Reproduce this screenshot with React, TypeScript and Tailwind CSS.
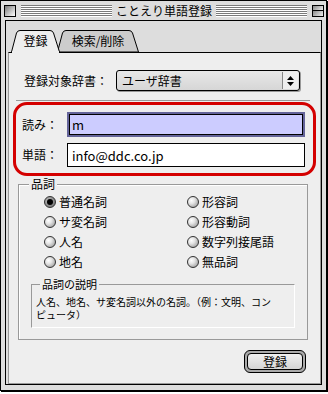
import React from 'react'

const font = "font-['Noto_Sans_CJK_JP',sans-serif]"

function Radio({ checked }: { checked?: boolean }) {
  return (
    <span
      className={
        'flex h-[12px] w-[12px] items-center justify-center rounded-full border border-[#333] ' +
        (checked
          ? 'bg-[radial-gradient(circle_at_35%_35%,#bbb_0%,#666_100%)]'
          : 'bg-[radial-gradient(circle_at_35%_35%,#fff_0%,#e4e4e4_35%,#8a8a8a_100%)]')
      }
    >
      {checked && <span className="h-[6px] w-[6px] rounded-full bg-black" />}
    </span>
  )
}

function Tab({ label, active, width }: { label: string; active?: boolean; width: number }) {
  const w = width
  const h = 22
  const d = `M0.5,${h} L5.5,3 Q6.5,0.5 9,0.5 L${w - 10},0.5 Q${w - 7.5},0.5 ${w - 6.5},3 L${w - 0.5},${h}`
  return (
    <div
      className={'relative flex h-[22px] items-center justify-center ' + (active ? 'z-10' : 'z-0')}
      style={{ width: w }}
    >
      <svg className="absolute inset-0" width={w} height={h + 1} viewBox={`0 0 ${w} ${h + 1}`}>
        <path d={d + (active ? '' : ' Z')} fill={active ? '#eeeeee' : '#cccccc'} stroke="#000" strokeWidth="1" />
        {active && <rect x="1" y={h - 1} width={w - 2} height="2" fill="#eeeeee" />}
      </svg>
      <span className="relative text-[12px] leading-none text-black">{label}</span>
    </div>
  )
}

const stripes =
  'h-[12px] flex-1 bg-[repeating-linear-gradient(to_bottom,#7a7a7a_0px,#7a7a7a_1px,#ffffff_1px,#ffffff_2px)]'

export default function App() {
  const left = ['普通名詞', 'サ変名詞', '人名', '地名']
  const right = ['形容詞', '形容動詞', '数字列接尾語', '無品詞']

  return (
    <div className={`h-[394px] w-[328px] bg-white ${font} text-black`}>
      {/* window */}
      <div className="h-[391px] w-[327px] border border-black bg-[#dddddd] shadow-[1px_1px_0_#000]">
        {/* title bar */}
        <div className="flex h-[19px] items-center pl-[3px] pr-[2px]">
          <span className="h-[12px] w-[12px] border border-black bg-[linear-gradient(135deg,#777_0%,#bbb_50%,#fff_100%)]" />
          <span className="ml-[5px] flex flex-1 items-center">
            <span className={stripes} />
            <span className="px-[4px] text-[12px] leading-none">ことえり単語登録</span>
            <span className={stripes} />
          </span>
          <span className="ml-[5px] flex h-[12px] w-[12px] flex-col border border-black bg-[#bbb]">
            <span className="h-[5px] border-b border-black bg-[linear-gradient(135deg,#888,#eee)]" />
            <span className="h-[5px] bg-[linear-gradient(135deg,#888,#eee)]" />
          </span>
        </div>

        {/* content region */}
        <div className="ml-[4px] h-[365px] w-[317px] border border-black bg-[#dddddd]">
          {/* tabs */}
          <div className="flex pl-[5px] pt-[9px]">
            <Tab label="登録" active width={49} />
            <div className="-ml-[3px]">
              <Tab label="検索/削除" width={82} />
            </div>
          </div>

          {/* tab panel */}
          <div className="ml-[2px] flex h-[332px] w-[313px] flex-col border border-[#999] border-t-black bg-[#eeeeee]">
            <div className="mt-[17px] flex items-center pl-[15px]">
              <span className="w-[92px] text-[12px] leading-none">登録対象辞書：</span>
              <div className="flex h-[21px] w-[184px] rounded-[3px] border border-black bg-[linear-gradient(to_bottom,#e8e8e8,#d6d6d6)] shadow-[1px_1px_0_#999]">
                <span className="flex flex-1 items-center pl-[5px] text-[12px] leading-none">ユーザ辞書</span>
                <span className="mr-[1px] my-[1px] flex w-[16px] flex-col items-center justify-center gap-[2px] border-l border-[#888] bg-[#eeeeee]">
                  <svg width="7" height="4" viewBox="0 0 7 4"><path d="M3.5 0 L7 4 L0 4 Z" fill="#000" /></svg>
                  <svg width="7" height="4" viewBox="0 0 7 4"><path d="M0 0 L7 0 L3.5 4 Z" fill="#000" /></svg>
                </span>
              </div>
            </div>

            <div className="ml-[7px] mt-[9px] h-[2px] w-[294px] border-t border-[#999] border-b-white" />

            {/* highlighted reading / word box */}
            <div className="ml-[4px] h-[74px] w-[303px] rounded-[14px] border-[3px] border-[#d40000]">
              <div className="mt-[7px] flex items-center pl-[6px]">
                <span className="w-[45px] text-[12px] leading-none">読み：</span>
                <div className="h-[25px] w-[238px] border-[2px] border-[#64649a]">
                  <div className="flex h-full items-center border border-black bg-[#ccccff] pl-[2px] text-[13px] leading-none">
                    m
                  </div>
                </div>
              </div>
              <div className="mt-[6px] flex items-center pl-[6px]">
                <span className="w-[45px] text-[12px] leading-none">単語：</span>
                <div className="flex h-[24px] w-[238px] items-center border border-black bg-white pl-[4px] text-[13px] leading-none">
                  info@ddc.co.jp
                </div>
              </div>
            </div>

            {/* part of speech group */}
            <div className="relative ml-[9px] mt-[8px] h-[156px] w-[290px] border border-[#999] shadow-[inset_1px_1px_0_#fff]">
              <span className="absolute -top-[8px] left-[10px] bg-[#eeeeee] px-[2px] text-[12px] leading-[14px]">品詞</span>
              <div className="grid grid-cols-[143px_1fr] pl-[25px] pt-[7px]">
                {left.map((l, i) => (
                  <React.Fragment key={l}>
                    <div className="flex h-[20px] items-center gap-[3px] text-[12px] leading-none">
                      <Radio checked={i === 0} />
                      {l}
                    </div>
                    <div className="flex h-[20px] items-center gap-[3px] text-[12px] leading-none">
                      <Radio />
                      {right[i]}
                    </div>
                  </React.Fragment>
                ))}
              </div>

              <div className="relative ml-[12px] mt-[12px] h-[44px] w-[264px] border border-[#999] border-b-white border-r-white">
                <span className="absolute -top-[7px] left-[8px] bg-[#eeeeee] px-[2px] text-[11px] leading-[13px]">品詞の説明</span>
                <p className="w-[248px] pl-[4px] pt-[10px] text-[10px] leading-[13px]">
                  人名、地名、サ変名詞以外の名詞。（例：文明、コンピュータ）
                </p>
              </div>
            </div>

            {/* register button */}
            <div className="mr-[14px] mt-[10px] self-end">
              <div className="flex h-[23px] w-[62px] rounded-[6px] border border-black bg-[#aaaaaa] p-[2px]">
                <div className="flex flex-1 items-center justify-center rounded-[4px] border border-black bg-[linear-gradient(to_bottom,#f0f0f0,#d4d4d4)] text-[12px] leading-none">
                  登録
                </div>
              </div>
            </div>
          </div>
        </div>
      </div>
    </div>
  )
}
